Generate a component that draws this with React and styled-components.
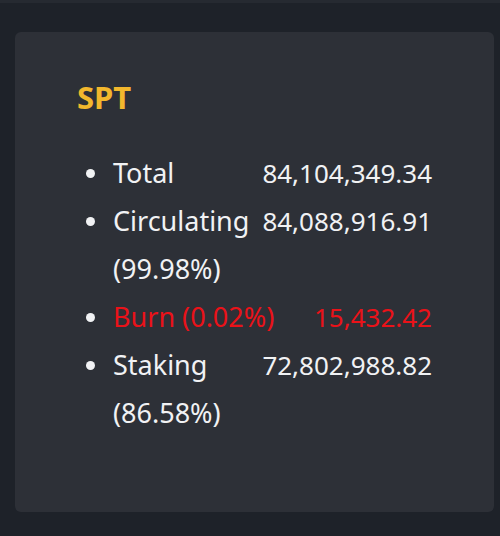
import React from "react";
import styled, { createGlobalStyle } from "styled-components";

const GlobalStyle = createGlobalStyle`
  html, body {
    margin: 0;
    padding: 0;
    background: #1e2229;
  }
  body {
    font-family: "Noto Sans", "Liberation Sans", sans-serif;
  }
`;

const rows = [
  { label: "Total", value: "84,104,349.34" },
  { label: "Circulating (99.98%)", value: "84,088,916.91" },
  { label: "Burn (0.02%)", value: "15,432.42", burn: true },
  { label: "Staking (86.58%)", value: "72,802,988.82" },
];

export default function App() {
  return (
    <>
      <GlobalStyle />
      <Page>
        <Card>
          <Title>SPT</Title>
          <List>
            {rows.map((row) => (
              <Item key={row.label} $burn={row.burn}>
                <Bullet />
                <Row>
                  <Label>{row.label}</Label>
                  <Value>{row.value}</Value>
                </Row>
              </Item>
            ))}
          </List>
        </Card>
      </Page>
    </>
  );
}

const Page = styled.div`
  width: 500px;
  height: 536px;
  box-sizing: border-box;
  padding: 29px 6px 24px 15px;
  border-top: 3px solid #262a31;
`;

const Card = styled.section`
  box-sizing: border-box;
  height: 100%;
  background: #2d3037;
  border-radius: 6px;
  padding: 45px 0 0 62px;
`;

const Title = styled.h2`
  margin: 0 0 32px;
  font-size: 31px;
  font-weight: 700;
  line-height: 40px;
  color: #f2b72d;
`;

const List = styled.ul`
  margin: 0;
  padding: 0;
  width: 355px;
  list-style: none;
`;

const Item = styled.li`
  display: flex;
  align-items: flex-start;
  font-size: 27px;
  line-height: 48px;
  color: ${(p) => (p.$burn ? "#ea1219" : "#f1f2f4")};
`;

const Bullet = styled.span`
  flex: none;
  width: 36px;
  height: 48px;
  display: flex;
  align-items: center;

  &::before {
    content: "";
    width: 9px;
    height: 9px;
    margin-left: 9px;
    border-radius: 50%;
    background: #f1f2f4;
  }
`;

const Row = styled.div`
  flex: 1;
  display: flex;
  justify-content: space-between;
  gap: 8px;
`;

const Label = styled.span`
  flex: 0 1 auto;
`;

const Value = styled.span`
  flex: none;
  font-size: 26px;
  white-space: nowrap;
`;
